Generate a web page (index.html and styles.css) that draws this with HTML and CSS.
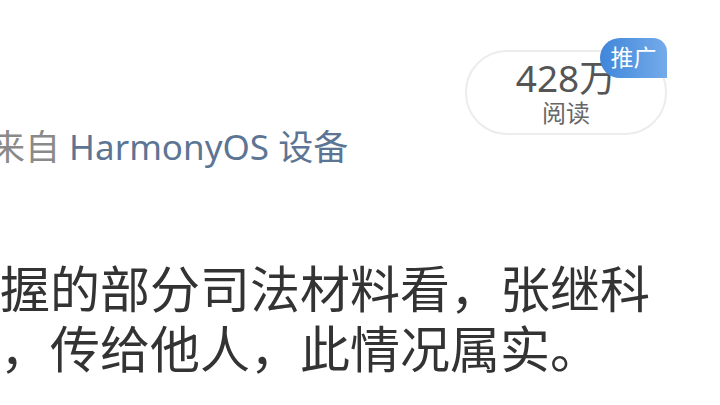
FILE: index.html
```html
<!DOCTYPE html>
<html lang="zh-CN">
<head>
    <meta charset="UTF-8">
    <meta name="viewport" content="width=device-width, initial-scale=1.0">
    <title>微博正文</title>
    <link rel="stylesheet" href="styles.css">
</head>
<body>
    <div class="post">
        <div class="post-header">
            <div class="source">来自 <span class="device">HarmonyOS 设备</span></div>
            <div class="read-pill">
                <span class="read-count">428万</span>
                <span class="read-label">阅读</span>
                <span class="promo-tag">推广</span>
            </div>
        </div>

        <div class="post-body">
            <p class="line">握的部分司法材料看，张继科</p>
            <p class="line">，传给他人，此情况属实。</p>
        </div>
    </div>
</body>
</html>
```

FILE: styles.css
```css
/* page */
body {
    margin: 0;
    padding: 0;
    background-color: #fff;
    font-family: "Noto Sans", "Noto Sans CJK SC", sans-serif;
    overflow: hidden;
}

.post {
    width: 720px;
    height: 405px;
    overflow: hidden;
}

.post-header {
    display: flex;
    justify-content: space-between;
    align-items: flex-end;
    padding-top: 50px;
}

.source {
    margin-left: -10px;
    font-size: 35px;
    line-height: 40px;
    color: #8a8a8a;
}

.device {
    color: #5d7594;
}

.read-pill {
    position: relative;
    box-sizing: border-box;
    width: 202px;
    height: 85px;
    margin-right: 53px;
    margin-bottom: 32px;
    border: 2px solid #ececec;
    border-radius: 42px;
    display: flex;
    flex-direction: column;
    align-items: center;
    justify-content: center;
    color: #555;
}

.read-count {
    font-size: 37px;
    line-height: 38px;
}

.read-label {
    margin-top: 2px;
    font-size: 24px;
    line-height: 28px;
    color: #666;
}

.promo-tag {
    position: absolute;
    top: -14px;
    right: -2px;
    width: 67px;
    height: 40px;
    border-radius: 20px 14px 0 20px;
    background: linear-gradient(90deg, #3f86da, #74abea);
    color: #fff;
    font-size: 23px;
    line-height: 38px;
    text-align: center;
}

.post-body {
    margin-top: 92px;
    color: #333;
}

.line {
    margin: 0;
    font-size: 50px;
    line-height: 60px;
    white-space: nowrap;
}
```
